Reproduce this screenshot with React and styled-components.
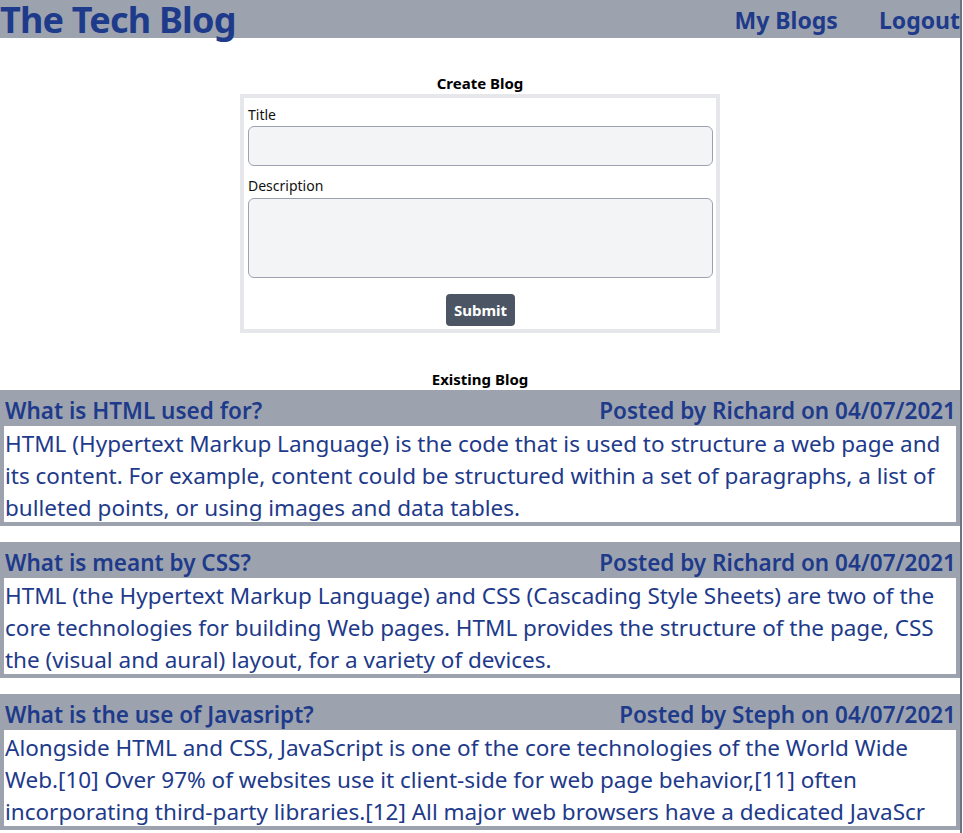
import styled, { createGlobalStyle } from "styled-components";

const blogs = [
  {
    title: "What is HTML used for?",
    author: "Richard",
    date: "04/07/2021",
    body: "HTML (Hypertext Markup Language) is the code that is used to structure a web page and its content. For example, content could be structured within a set of paragraphs, a list of bulleted points, or using images and data tables."
  },
  {
    title: "What is meant by CSS?",
    author: "Richard",
    date: "04/07/2021",
    body: "HTML (the Hypertext Markup Language) and CSS (Cascading Style Sheets) are two of the core technologies for building Web pages. HTML provides the structure of the page, CSS the (visual and aural) layout, for a variety of devices."
  },
  {
    title: "What is the use of Javasript?",
    author: "Steph",
    date: "04/07/2021",
    body: "Alongside HTML and CSS, JavaScript is one of the core technologies of the World Wide Web.[10] Over 97% of websites use it client-side for web page behavior,[11] often incorporating third-party libraries.[12] All major web browsers have a dedicated JavaScr"
  }
];

const GlobalStyle = createGlobalStyle`
  body {
    margin: 0;
    font-family: "Noto Sans", "Open Sans", sans-serif;
    background: #ffffff;
  }
`;

export default function App() {
  return (
    <>
      <GlobalStyle />
      <Page>
        <Header>
          <Logo>The Tech Blog</Logo>
          <Nav>
            <NavLink>My Blogs</NavLink>
            <NavLink>Logout</NavLink>
          </Nav>
        </Header>

        <Main>
          <SectionTitle>Create Blog</SectionTitle>
          <Form>
            <Label>Title</Label>
            <TextInput />
            <Label $spaced>Description</Label>
            <TextArea />
            <Submit>Submit</Submit>
          </Form>

          <SectionTitle $top={36}>Existing Blog</SectionTitle>
          <Posts>
            {blogs.map((blog) => (
              <Post key={blog.title}>
                <PostHead>
                  <span>{blog.title}</span>
                  <span>Posted by {blog.author} on {blog.date}</span>
                </PostHead>
                <PostBody>{blog.body}</PostBody>
              </Post>
            ))}
          </Posts>
        </Main>
      </Page>
    </>
  );
}

const Page = styled.div`
  width: 960px;
  min-height: 833px;
  border-right: 2px solid #6b7280;
`;

const Header = styled.header`
  align-items: flex-start;
  background: #9ca3af;
  display: flex;
  height: 38px;
  justify-content: space-between;
`;

const Logo = styled.h1`
  color: #1e3a8a;
  font-size: 36px;
  font-weight: 700;
  letter-spacing: -0.8px;
  line-height: 40px;
  margin: 0;
`;

const Nav = styled.nav`
  display: flex;
  gap: 41px;
  padding-top: 4px;
`;

const NavLink = styled.a`
  color: #1e3a8a;
  cursor: pointer;
  font-size: 23px;
  font-weight: 700;
  line-height: 32px;
`;

const Main = styled.main`
  align-items: center;
  display: flex;
  flex-direction: column;
  padding-top: 35px;
`;

const SectionTitle = styled.h2`
  color: #000;
  font-size: 15px;
  font-weight: 700;
  line-height: 20px;
  margin: ${({ $top }) => $top || 0}px 0 0;
`;

const Form = styled.form`
  border: 4px solid #e5e7eb;
  box-sizing: border-box;
  display: flex;
  flex-direction: column;
  margin-top: 1px;
  padding: 7px 3px 3px 4px;
  width: 480px;
`;

const Label = styled.label`
  color: #111;
  font-size: 14px;
  line-height: 20px;
  margin-top: ${({ $spaced }) => ($spaced ? "10px" : "0")};
`;

const TextInput = styled.input`
  background: #f3f4f6;
  border: 1px solid #9ca3af;
  border-radius: 6px;
  box-sizing: border-box;
  height: 40px;
  margin-top: 1px;
`;

const TextArea = styled.textarea`
  background: #f3f4f6;
  border: 1px solid #9ca3af;
  border-radius: 6px;
  box-sizing: border-box;
  height: 80px;
  margin-top: 2px;
  resize: none;
`;

const Submit = styled.button`
  align-self: center;
  background: #4b5563;
  border: none;
  border-radius: 4px;
  color: #fff;
  font-family: inherit;
  font-size: 15px;
  font-weight: 700;
  height: 32px;
  margin-top: 16px;
  padding: 0 8px;
`;

const Posts = styled.div`
  display: flex;
  flex-direction: column;
  gap: 16px;
  margin-top: 1px;
  width: 100%;
`;

const Post = styled.article`
  background: #9ca3af;
  border: 4px solid #9ca3af;
  border-top: none;
`;

const PostHead = styled.div`
  color: #1e3a8a;
  display: flex;
  font-size: 22.5px;
  font-weight: 600;
  height: 36px;
  justify-content: space-between;
  line-height: 42px;
  padding: 0 0 0 1px;
`;

const PostBody = styled.p`
  background: #fff;
  color: #1e3a8a;
  font-size: 22.5px;
  height: 96px;
  line-height: 32px;
  margin: 0;
  overflow: hidden;
  padding: 2px 0 0 1px;
  box-sizing: border-box;
`;
